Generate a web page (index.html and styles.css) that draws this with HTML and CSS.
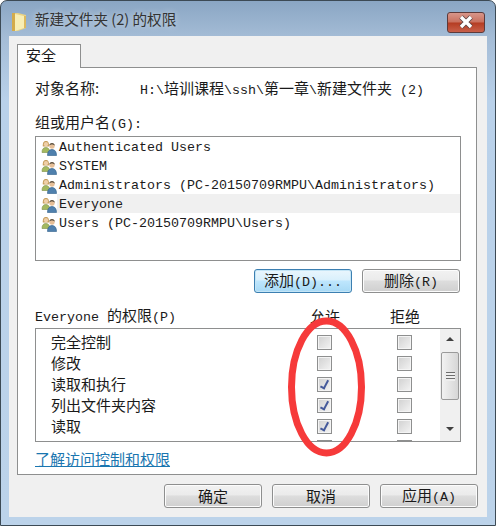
FILE: index.html
```html
<!DOCTYPE html>
<html lang="zh-CN">
<head>
    <meta charset="UTF-8">
    <meta name="viewport" content="width=device-width, initial-scale=1.0">
    <title>新建文件夹 (2) 的权限</title>
    <link rel="stylesheet" href="styles.css">
</head>
<body>
    <svg class="defs" width="0" height="0">
        <symbol id="group" viewBox="0 0 16 16">
            <path d="M1 12.500c0-3.500 1.500-5 3.800-5s4 1.500 4 5z" fill="#a4b95f" stroke="#7c8f45" stroke-width=".6"/>
            <path d="M1.800 6.500C1.500 2.500 2.800 1 5 1s3.200 1.500 3 5.500z" fill="#c79f5e"/>
            <circle cx="5" cy="4.200" r="2.100" fill="#efcfa8"/>
            <path d="M6.500 15.500c0-4 1.800-6 4.500-6s4.500 2 4.500 6z" fill="#4f80ad" stroke="#2f5f8c" stroke-width=".6"/>
            <circle cx="11" cy="6" r="2.700" fill="#e6bf98"/>
            <path d="M8.300 5.800C8.200 3.900 9.500 3 11 3s2.800.9 2.700 2.800c-1-1-1.800-1.200-2.700-1.200s-1.700.2-2.700 1.200z" fill="#5a5040"/>
        </symbol>
    </svg>

    <div class="window">
        <!-- Titelbalk -->
        <div class="titlebar">
            <svg class="folder" width="15" height="19" viewBox="0 0 15 19">
                <path d="M0 1h6l8 2v13l-8 3H0z" fill="#e9d283"/>
                <path d="M0 1h3v18H0z" fill="#d3ab4a"/>
                <path d="M3 2l9 2v12l-9 3z" fill="#f8eeb4"/>
                <path d="M12 4l2 0v12l-2 0z" fill="#dcb95e"/>
            </svg>
            <span class="title">新建文件夹 (2) 的权限</span>
            <div class="close">
                <svg width="16" height="14" viewBox="0 0 16 14">
                    <path d="M3 2l10 10M13 2L3 12" stroke="#5a4444" stroke-width="5"/>
                    <path d="M3 2l10 10M13 2L3 12" stroke="#fff" stroke-width="3.400"/>
                </svg>
            </div>
        </div>

        <div class="client">
            <div class="tabs"><div class="tab">安全</div></div>

            <div class="panel">
                <div class="object-row">
                    <span class="object-label">对象名称:</span>
                    <span><span class="lat">H:\</span>培训课程<span class="lat">\ssh\</span>第一章<span class="lat">\</span>新建文件夹<span class="lat"> (2)</span></span>
                </div>

                <div class="group-label">组或用户名<span class="lat">(G):</span></div>
                <div class="user-list">
                    <div class="user"><svg class="user-icon"><use href="#group"/></svg><span class="lat">Authenticated Users</span></div>
                    <div class="user"><svg class="user-icon"><use href="#group"/></svg><span class="lat">SYSTEM</span></div>
                    <div class="user"><svg class="user-icon"><use href="#group"/></svg><span class="lat">Administrators (PC-20150709RMPU\Administrators)</span></div>
                    <div class="user selected"><svg class="user-icon"><use href="#group"/></svg><span class="lat">Everyone</span></div>
                    <div class="user"><svg class="user-icon"><use href="#group"/></svg><span class="lat">Users (PC-20150709RMPU\Users)</span></div>
                </div>

                <div class="list-buttons">
                    <button class="btn default">添加<span class="lat">(D)...</span></button>
                    <button class="btn">删除<span class="lat">(R)</span></button>
                </div>

                <div class="perm-head">
                    <span class="perm-name"><span class="lat">Everyone </span>的权限<span class="lat">(P)</span></span>
                    <span class="perm-col">允许</span>
                    <span class="perm-col">拒绝</span>
                </div>

                <div class="perm-box">
                    <div class="perm-rows">
                        <div class="perm"><span class="perm-name">完全控制</span><span class="cell"><i class="check"></i></span><span class="cell"><i class="check"></i></span></div>
                        <div class="perm"><span class="perm-name">修改</span><span class="cell"><i class="check"></i></span><span class="cell"><i class="check"></i></span></div>
                        <div class="perm"><span class="perm-name">读取和执行</span><span class="cell"><i class="check on"></i></span><span class="cell"><i class="check"></i></span></div>
                        <div class="perm"><span class="perm-name">列出文件夹内容</span><span class="cell"><i class="check on"></i></span><span class="cell"><i class="check"></i></span></div>
                        <div class="perm"><span class="perm-name">读取</span><span class="cell"><i class="check on"></i></span><span class="cell"><i class="check"></i></span></div>
                        <div class="perm"><span class="perm-name">写入</span><span class="cell"><i class="check"></i></span><span class="cell"><i class="check"></i></span></div>
                    </div>
                    <div class="scrollbar">
                        <div class="arrow up"></div>
                        <div class="thumb"><span class="grip"></span></div>
                        <div class="arrow down"></div>
                    </div>
                </div>

                <a class="help" href="#">了解访问控制和权限</a>
            </div>

            <div class="footer">
                <button class="btn">确定</button>
                <button class="btn">取消</button>
                <button class="btn">应用<span class="lat">(A)</span></button>
            </div>
        </div>

        <!-- Rode markering over de kolom -->
        <svg class="marker" width="90" height="150" viewBox="0 0 90 150">
            <ellipse cx="42.500" cy="72" rx="35" ry="66" fill="none" stroke="#f63a3a" stroke-width="7"/>
        </svg>
    </div>
</body>
</html>
```

FILE: styles.css
```css
/* Algemeen */
html, body {
    margin: 0;
    padding: 0;
}

body {
    width: 496px;
    height: 526px;
    overflow: hidden;
    font-family: "Noto Sans CJK SC", sans-serif;
    font-size: 15px;
    color: #1a1a1a;
    background-color: #fff;
}

.defs {
    position: absolute;
}

.lat {
    font-family: "Liberation Mono", monospace;
    font-size: 13.33px;
}

/* Venster */
.window {
    position: relative;
    box-sizing: border-box;
    width: 496px;
    height: 526px;
    display: flex;
    flex-direction: column;
    border: 1px solid #3c4a55;
    border-radius: 7px 7px 0 0;
    background: linear-gradient(to bottom, #8aa6c4 0, #a4bcd6 36px, #b9d1ea 100px, #bcd3ea 100%);
    overflow: hidden;
}

.titlebar {
    flex: none;
    height: 35px;
    display: flex;
    align-items: center;
    padding-left: 11px;
    padding-right: 10px;
}

.folder {
    flex: none;
    margin-top: 9px;
    margin-bottom: 4px;
}

.title {
    margin-left: 8px;
    margin-top: -1px;
    font-family: "Noto Sans CJK SC", sans-serif;
    font-size: 14.6px;
    color: #333;
    text-shadow: 0 0 6px rgba(255, 255, 255, 0.6);
}

.close {
    margin-left: auto;
    margin-top: 7px;
    width: 36px;
    height: 19px;
    border: 1px solid #5d3a3a;
    border-radius: 3px;
    display: flex;
    align-items: center;
    justify-content: center;
    background: linear-gradient(to bottom, #d8968a 0, #c9705e 48%, #b53c22 52%, #c8604a 100%);
}

.client {
    flex: 1;
    min-height: 0;
    margin: 0 8px 8px 8px;
    padding: 8px 10px 0 8px;
    background-color: #f0f0f0;
    display: flex;
    flex-direction: column;
}

/* Tabblad */
.tabs {
    display: flex;
    height: 23px;
    flex: none;
}

.tab {
    box-sizing: border-box;
    width: 64px;
    height: 24px;
    position: relative;
    z-index: 1;
    border: 1px solid #8e8f8f;
    border-bottom: none;
    background-color: #fff;
    padding-left: 8px;
    line-height: 20px;
}

.panel {
    box-sizing: border-box;
    flex: none;
    height: 408px;
    border: 1px solid #8e8f8f;
    background-color: #fff;
    padding: 0 15px 0 17px;
}

.object-row {
    display: flex;
    height: 20px;
    margin-top: 10px;
    line-height: 20px;
}

.object-label {
    width: 105px;
    flex: none;
}

.group-label {
    height: 20px;
    margin-top: 14px;
    line-height: 20px;
}

/* Gebruikerslijst */
.user-list {
    box-sizing: border-box;
    height: 125px;
    margin-top: 4px;
    border: 1px solid #8e8f8f;
}

.user {
    box-sizing: border-box;
    height: 19px;
    display: flex;
    align-items: center;
    margin-left: 21px;
    padding-left: 2px;
    padding-top: 2px;
}

.user.selected {
    background-color: #f0f0f0;
}

.user-icon {
    width: 16px;
    height: 16px;
    flex: none;
    margin-left: -18px;
    margin-right: 2px;
}

/* Knoppen */
.list-buttons {
    display: flex;
    justify-content: flex-end;
    gap: 10px;
    margin-top: 8px;
    margin-right: 1px;
}

.btn {
    box-sizing: border-box;
    width: 98px;
    height: 24px;
    padding: 0;
    border: 1px solid #8e8f8f;
    border-radius: 3px;
    font-family: "Noto Sans CJK SC", sans-serif;
    font-size: 15px;
    line-height: 20px;
    color: #1a1a1a;
    background: linear-gradient(to bottom, #f2f2f2 0, #ebebeb 45%, #dddddd 50%, #cfcfcf 100%);
    box-shadow: inset 0 0 0 1px #fcfcfc;
}

.btn.default {
    border-color: #3c7fb1;
    background: linear-gradient(to bottom, #eaf6fd 0, #d9f0fc 45%, #bee6fd 50%, #a7d9f5 100%);
    box-shadow: inset 0 0 0 1px #c4e5f6;
}

/* Rechten */
.perm-head {
    display: flex;
    align-items: center;
    height: 20px;
    margin-top: 13px;
    line-height: 20px;
}

.perm-name {
    flex: 1;
}

.perm-col {
    width: 80px;
    text-align: center;
}

.perm-head .perm-col:last-child {
    margin-right: 16px;
}

.perm-box {
    box-sizing: border-box;
    display: flex;
    height: 114px;
    margin-top: 2px;
    border: 1px solid #8e8f8f;
}

.perm-rows {
    flex: 1;
    overflow: hidden;
    padding-top: 3px;
}

.perm {
    display: flex;
    align-items: center;
    height: 21px;
    padding-left: 15px;
    line-height: 20px;
}

.perm .perm-name {
    padding-bottom: 2px;
}

.perm-name + .cell + .cell {
    margin-right: -4px;
}

.cell {
    width: 80px;
    flex: none;
    display: flex;
    justify-content: center;
}

.check {
    box-sizing: border-box;
    position: relative;
    display: block;
    width: 15px;
    height: 15px;
    border: 1px solid #8e8f8f;
    box-shadow: inset 0 0 0 1px #f4f4f4;
    background: linear-gradient(135deg, #d0d0d0, #f4f4f4);
}

.check.on::after {
    content: "";
    position: absolute;
    left: 4px;
    top: 1px;
    width: 3px;
    height: 8px;
    border: solid #44599a;
    border-width: 0 2px 2px 0;
    transform: rotate(28deg);
}

/* Schuifbalk */
.scrollbar {
    width: 20px;
    flex: none;
    background-color: #f0f0f0;
    display: flex;
    flex-direction: column;
    align-items: center;
}

.arrow {
    flex: none;
    width: 0;
    height: 0;
    border-left: 4px solid transparent;
    border-right: 4px solid transparent;
}

.arrow.up {
    margin-top: 8px;
    border-bottom: 4px solid #404040;
}

.arrow.down {
    margin-top: 27px;
    border-top: 4px solid #404040;
}

.thumb {
    box-sizing: border-box;
    flex: none;
    width: 18px;
    height: 48px;
    margin-top: 11px;
    border: 1px solid #9a9a9a;
    border-radius: 2px;
    display: flex;
    align-items: center;
    justify-content: center;
    background: linear-gradient(to right, #f2f2f2, #d6d6d6);
}

.grip {
    display: block;
    width: 9px;
    height: 9px;
    background: repeating-linear-gradient(to bottom, #6d6d6d 0, #6d6d6d 1px, #eee 1px, #eee 3px);
}

.help {
    display: block;
    margin-top: 7px;
    height: 20px;
    line-height: 20px;
    color: #1a76b0;
}

/* Onderste knoppen */
.footer {
    display: flex;
    justify-content: flex-end;
    gap: 10px;
    margin-top: 9px;
    margin-right: -1px;
}

/* Markering */
.marker {
    position: absolute;
    left: 283px;
    top: 314px;
}
```
